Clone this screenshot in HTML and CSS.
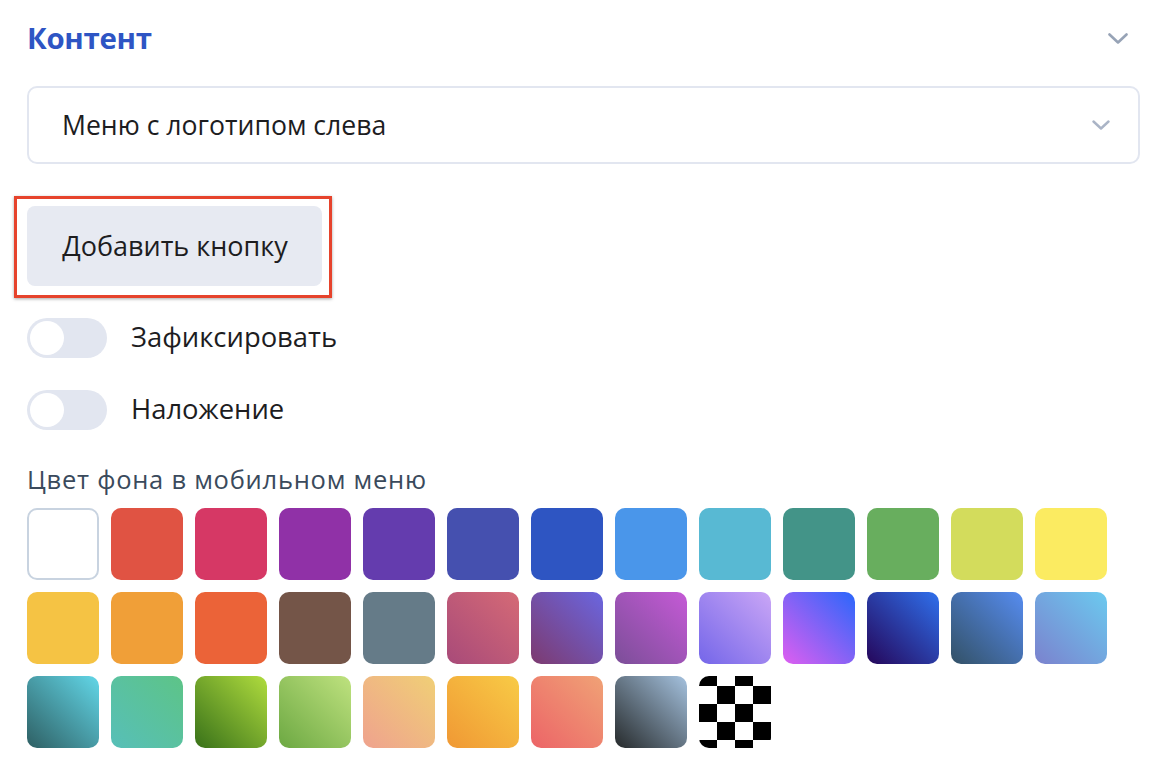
FILE: index.html
```html
<!DOCTYPE html>
<html lang="ru">
<head>
<meta charset="utf-8">
<link rel="stylesheet" href="styles.css">
</head>
<body>
<div class="panel">
  <div class="section-head">
    <h2 class="title">Контент</h2>
    <svg class="chev chev-head" viewBox="0 0 20 11" width="20" height="11"><path d="M1.5 1.5 L10 9.5 L18.5 1.5" fill="none" stroke="currentColor" stroke-width="2.6" stroke-linecap="round" stroke-linejoin="round"/></svg>
  </div>
  <div class="select">
    <span class="select-text">Меню с логотипом слева</span>
    <svg class="chev chev-select" viewBox="0 0 18 10" width="18" height="10"><path d="M1.5 1.5 L9 8.5 L16.5 1.5" fill="none" stroke="currentColor" stroke-width="2.4" stroke-linecap="round" stroke-linejoin="round"/></svg>
  </div>
  <div class="btn-wrap">
    <button class="btn">Добавить кнопку</button>
  </div>
  <div class="toggle-row">
    <span class="toggle"><span class="knob"></span></span>
    <span class="toggle-label">Зафиксировать</span>
  </div>
  <div class="toggle-row second">
    <span class="toggle"><span class="knob"></span></span>
    <span class="toggle-label">Наложение</span>
  </div>
  <div class="field-label">Цвет фона в мобильном меню</div>
  <div class="swatches">
    <span class="sw sw-white"></span>
    <span class="sw" style="background:#e05343"></span>
    <span class="sw" style="background:#d63865"></span>
    <span class="sw" style="background:#9031a7"></span>
    <span class="sw" style="background:#643cae"></span>
    <span class="sw" style="background:#4550af"></span>
    <span class="sw" style="background:#2e55c2"></span>
    <span class="sw" style="background:#4a96ea"></span>
    <span class="sw" style="background:#58b9d3"></span>
    <span class="sw" style="background:#439488"></span>
    <span class="sw" style="background:#68ae5e"></span>
    <span class="sw" style="background:#d3dc5c"></span>
    <span class="sw" style="background:#fbeb61"></span>

    <span class="sw" style="background:#f5c344"></span>
    <span class="sw" style="background:#f09f38"></span>
    <span class="sw" style="background:#eb6338"></span>
    <span class="sw" style="background:#745548"></span>
    <span class="sw" style="background:#657b88"></span>
    <span class="sw" style="background:linear-gradient(to top right,#a84a79,#d56a76)"></span>
    <span class="sw" style="background:linear-gradient(to top right,#7d3a6f,#6a66e0)"></span>
    <span class="sw" style="background:linear-gradient(to top right,#7b4e98,#c55ad6)"></span>
    <span class="sw" style="background:linear-gradient(to top right,#7466e9,#caa6f6)"></span>
    <span class="sw" style="background:linear-gradient(to top right,#de5ef0,#2a67fb)"></span>
    <span class="sw" style="background:linear-gradient(to top right,#25065a,#2f70ec)"></span>
    <span class="sw" style="background:linear-gradient(to top right,#335166,#568cf0)"></span>
    <span class="sw" style="background:linear-gradient(to top right,#7b82ce,#6bcaef)"></span>

    <span class="sw" style="background:linear-gradient(to top right,#2e5f63,#62d7e8)"></span>
    <span class="sw" style="background:linear-gradient(to top right,#57bfb8,#5dc487)"></span>
    <span class="sw" style="background:linear-gradient(to top right,#387119,#b0dc3e)"></span>
    <span class="sw" style="background:linear-gradient(to top right,#6ca842,#bfe27f)"></span>
    <span class="sw" style="background:linear-gradient(to top right,#efa28e,#f0cf76)"></span>
    <span class="sw" style="background:linear-gradient(to top right,#f09834,#f8cb46)"></span>
    <span class="sw" style="background:linear-gradient(to top right,#ec6467,#f0a276)"></span>
    <span class="sw" style="background:linear-gradient(to top right,#262a2b,#a5c2df)"></span>
    <span class="sw sw-checker"></span>
  </div>
</div>
</body>
</html>
```

FILE: styles.css
```css
* { box-sizing: border-box; }
html, body { margin: 0; padding: 0; background: #fff; }
body {
  font-family: "Open Sans", "Noto Sans", sans-serif;
  color: #1d1d1f;
}
.panel {
  width: 1113px;
  margin-left: 27px;
}
.section-head {
  height: 76px;
  display: flex;
  align-items: center;
  justify-content: space-between;
}
.title {
  margin: 0;
  font-size: 29.4px;
  font-weight: 700;
  color: #2e55c4;
  letter-spacing: -0.3px;
}
.chev { display: block; }
.chev-head { color: #97a3b6; margin-right: 12px; }
.select {
  margin-top: 10px;
  height: 78px;
  border: 2px solid #e2e6f0;
  border-radius: 10px;
  display: flex;
  align-items: center;
  justify-content: space-between;
  padding: 0 28px 0 33px;
}
.select-text { font-size: 26.6px; }
.chev-select { color: #aab4c6; }
.btn-wrap {
  margin-top: 42px;
  position: relative;
  width: 295px;
}
.btn-wrap::after {
  content: "";
  position: absolute;
  top: -10px; left: -13px; right: -10px; bottom: -12px;
  border: 3px solid #e6432c;
  box-shadow: 0 1px 3px rgba(0,0,0,0.35);
  pointer-events: none;
}
.btn {
  display: block;
  width: 295px;
  height: 80px;
  border: none;
  border-radius: 8px;
  background: #e7eaf2;
  font-family: inherit;
  font-size: 27px;
  color: #1d1d1f;
  padding: 0 0 2px 1px;
}
.toggle-row {
  margin-top: 32px;
  height: 40px;
  display: flex;
  align-items: center;
  gap: 24px;
}
.toggle {
  width: 80px;
  height: 40px;
  border-radius: 20px;
  background: #e2e6f0;
  padding: 3px;
  display: flex;
}
.knob {
  width: 34px;
  height: 34px;
  border-radius: 50%;
  background: #fff;
}
.toggle-label { font-size: 27.4px; margin-top: -3px; }
.field-label {
  margin-top: 34px;
  line-height: 30px;
  font-size: 25.5px;
  letter-spacing: 0.75px;
  color: #3a4a5c;
}
.swatches {
  margin-top: 14px;
  display: grid;
  grid-template-columns: repeat(13, 72px);
  gap: 12px;
}
.sw {
  display: block;
  width: 72px;
  height: 72px;
  border-radius: 10px;
}
.sw-white {
  background: #fff;
  border: 2px solid #c8d3e0;
}
.sw-checker {
  background: repeating-conic-gradient(#fff 0 25%, #000 0 50%);
  background-size: 36px 36px;
  background-position: 0 -8px;
}
```
